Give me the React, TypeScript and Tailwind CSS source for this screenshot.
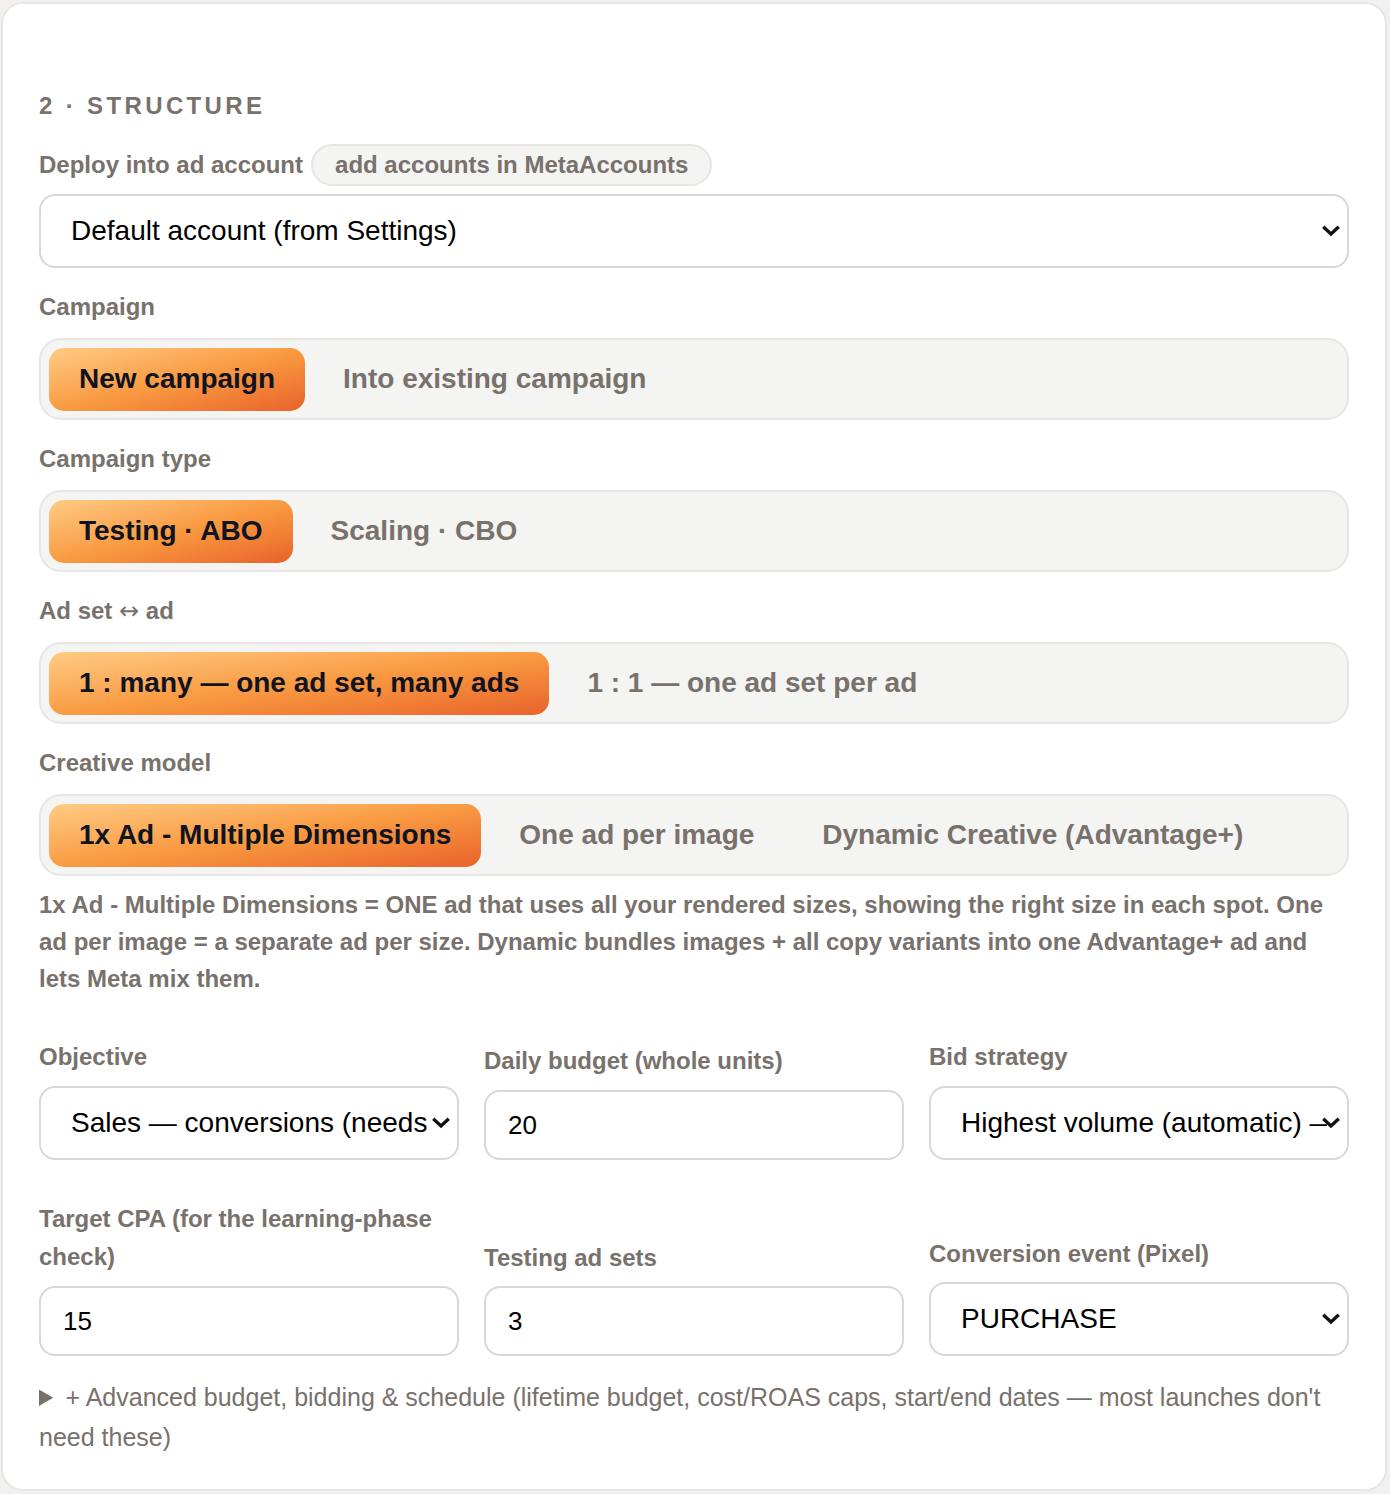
import React from "react";

const F = { fontFamily: '"Liberation Sans", Arial, Helvetica, sans-serif' };

function Chevron() {
  return (
    <svg
      className="pointer-events-none absolute right-[9px] top-1/2 -translate-y-1/2"
      width="18"
      height="12"
      viewBox="0 0 18 12"
      fill="none"
    >
      <path d="M2.5 3 L9 9 L15.5 3" stroke="#111" strokeWidth="3.4" strokeLinecap="square" />
    </svg>
  );
}

function Select({ value, h = "h-[74px]", text = "text-[28px]", pr = "pr-[26px]" }: { value: string; h?: string; text?: string; pr?: string }) {
  return (
    <div className="relative">
      <select
        defaultValue={value}
        style={F}
        className={`block w-full ${h} appearance-none rounded-[16px] border-2 border-[#dad7d4] bg-white pl-[30px] ${pr} ${text} text-black outline-none`}
      >
        <option value={value}>{value}</option>
      </select>
      <Chevron />
    </div>
  );
}

function Input({ value }: { value: string }) {
  return (
    <input
      defaultValue={value}
      style={F}
      className="block h-[70px] w-full rounded-[16px] border-2 border-[#dad7d4] bg-white px-[22px] text-[26px] text-black outline-none"
    />
  );
}

function Segmented({ options, active = 0 }: { options: string[]; active?: number }) {
  return (
    <div className="flex h-[82px] items-center gap-[8px] rounded-[22px] border-2 border-[#e7e6e4] bg-[#f4f4f3] px-[8px]">
      {options.map((o, i) =>
        i === active ? (
          <div
            key={o}
            className="flex h-[63px] items-center rounded-[15px] bg-linear-to-br from-[#fecb83] via-[#f99b42] to-[#e8622a] px-[30px] text-[28px] font-bold text-[#0f1420]"
          >
            {o}
          </div>
        ) : (
          <div key={o} className="flex h-[63px] items-center px-[30px] text-[28px] font-bold text-[#78716c]">
            {o}
          </div>
        )
      )}
    </div>
  );
}

function Label({ children, className = "" }: { children: React.ReactNode; className?: string }) {
  return <div className={`text-[24px] font-bold leading-[36px] text-[#78716c] ${className}`}>{children}</div>;
}

export default function App() {
  return (
    <div style={F} className="min-h-[1494px] w-[1390px] bg-[#f1f0ee] pl-[1px] pt-[2px]">
      <div className="w-[1386px] rounded-[22px] border-2 border-[#e8e6e3] bg-white px-[36px] pb-[32px] pt-[84px]">
        <div className="text-[24px] font-bold leading-[36px] tracking-[0.14em] text-[#78716c]">2 · STRUCTURE</div>

        <div className="mt-[20px] flex items-center gap-[8px]">
          <Label>Deploy into ad account</Label>
          <span className="rounded-full border-2 border-[#e7e6e4] bg-[#f4f4f3] px-[22px] py-[5px] text-[24px] font-bold leading-[28px] text-[#78716c]">
            add accounts in MetaAccounts
          </span>
        </div>
        <div className="mt-[8px]">
          <Select value="Default account (from Settings)" />
        </div>

        <Label className="mt-[21px] mb-[13px]">Campaign</Label>
        <Segmented options={["New campaign", "Into existing campaign"]} />

        <Label className="mt-[21px] mb-[13px]">Campaign type</Label>
        <Segmented options={["Testing · ABO", "Scaling · CBO"]} />

        <Label className="mt-[21px] mb-[13px]">
          Ad set <span className="font-normal text-[24px]" style={{ fontFamily: '"DejaVu Sans", sans-serif' }}>↔</span> ad
        </Label>
        <Segmented options={["1 : many — one ad set, many ads", "1 : 1 — one ad set per ad"]} />

        <Label className="mt-[21px] mb-[13px]">Creative model</Label>
        <Segmented options={["1x Ad - Multiple Dimensions", "One ad per image", "Dynamic Creative (Advantage+)"]} />

        <p className="mt-[10px] text-[24px] font-bold leading-[37px] text-[#78716c]">
          1x Ad - Multiple Dimensions = ONE ad that uses all your rendered sizes, showing the right size in each spot. One ad per
          image = a separate ad per size. Dynamic bundles images + all copy variants into one Advantage+ ad and lets Meta mix
          them.
        </p>

        <div className="mt-[42px] grid grid-cols-3 items-end gap-x-[25px] gap-y-[40px]">
          <div>
            <Label className="mb-[11px]">Objective</Label>
            <Select value="Sales — conversions (needs Pixel)" />
          </div>
          <div>
            <Label className="mb-[11px]">Daily budget (whole units)</Label>
            <Input value="20" />
          </div>
          <div>
            <Label className="mb-[11px]">Bid strategy</Label>
            <Select value="Highest volume (automatic) — default" pr="pr-[20px]" />
          </div>
          <div>
            <Label className="mb-[10px] leading-[38px]">Target CPA (for the learning-phase check)</Label>
            <Input value="15" />
          </div>
          <div>
            <Label className="mb-[10px]">Testing ad sets</Label>
            <Input value="3" />
          </div>
          <div>
            <Label className="mb-[10px]">Conversion event (Pixel)</Label>
            <Select value="PURCHASE" />
          </div>
        </div>

        <details className="mt-[21px]">
          <summary className="cursor-pointer text-[25px] leading-[40px] text-[#78716c]">
            + Advanced budget, bidding &amp; schedule (lifetime budget, cost/ROAS caps, start/end dates — most launches don't
            need these)
          </summary>
        </details>
      </div>
    </div>
  );
}
